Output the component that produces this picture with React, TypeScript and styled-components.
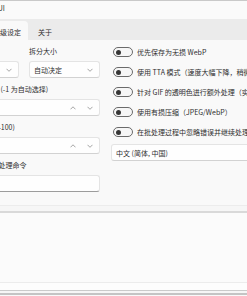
import React from 'react';
import styled, { createGlobalStyle } from 'styled-components';

const GlobalStyle = createGlobalStyle`
  html, body {
    margin: 0;
    padding: 0;
    overflow: hidden;
    background: #f9f9f9;
  }
  body {
    font-family: "Noto Sans CJK SC", "Noto Sans", sans-serif;
    font-size: 7px;
    color: #2e2e2e;
  }
`;

const Window = styled.div`
  width: 420px;
  height: 296px;
  margin-left: -60px;
  display: flex;
  flex-direction: column;
  background: #f9f9f9;
  border-top: 1px solid #c9c9c9;
`;

const TitleBar = styled.div`
  height: 18px;
  box-sizing: border-box;
  padding: 2px 0 0 8px;
  line-height: 10px;
  background: #fafafa;
`;

const TabStrip = styled.div`
  height: 21px;
  display: flex;
  align-items: flex-end;
  padding-left: 4px;
  background: #ebebeb;
`;

const Tab = styled.div<{ $active?: boolean }>`
  height: 19px;
  min-width: 34px;
  box-sizing: border-box;
  padding: 2px 7px 0;
  display: flex;
  align-items: center;
  justify-content: center;
  border-radius: 4px 4px 0 0;
  background: ${p => (p.$active ? '#f9f9f9' : 'transparent')};
`;

const Content = styled.div`
  height: 166px;
  box-sizing: border-box;
  display: grid;
  grid-template-columns: 152px 200px;
  column-gap: 11px;
  padding: 6px 8px 0;
  border-bottom: 1px solid #ececec;
`;

const LeftColumn = styled.div`
  display: flex;
  flex-direction: column;
  gap: 6px;
`;

const Pair = styled.div`
  display: grid;
  grid-template-columns: 1fr 1fr;
  column-gap: 10px;
`;

const Field = styled.div`
  display: flex;
  flex-direction: column;
  gap: 5px;
`;

const Label = styled.div`
  height: 10px;
  line-height: 10px;
  white-space: nowrap;
`;

const Box = styled.div<{ $strong?: boolean }>`
  height: 17px;
  box-sizing: border-box;
  display: flex;
  align-items: center;
  gap: 11px;
  padding: 0 6px 0 4px;
  background: #fefefe;
  border: 1px solid #e4e4e4;
  border-bottom-color: ${p => (p.$strong ? '#9c9c9c' : '#d2d2d2')};
  border-radius: 3px;
  white-space: nowrap;
`;

const BoxText = styled.span`
  flex: 1;
  line-height: 10px;
`;

const RightColumn = styled.div`
  margin-top: -4px;
  display: flex;
  flex-direction: column;
`;

const ToggleRow = styled.div`
  height: 20px;
  display: flex;
  align-items: center;
  gap: 4px;
  padding-left: 2px;
  white-space: nowrap;
`;

const Switch = styled.div`
  width: 20px;
  height: 10px;
  box-sizing: border-box;
  flex: none;
  display: flex;
  align-items: center;
  padding-left: 2px;
  border: 1px solid #6a6a6a;
  border-radius: 5px;
  background: #f6f6f6;
`;

const Knob = styled.div`
  width: 5px;
  height: 5px;
  border-radius: 50%;
  background: #343434;
`;

const LangBox = styled(Box)`
  margin-top: 2px;
`;

const Spacer = styled.div`
  height: 5px;
  background: #f6f6f6;
`;

const LogPanel = styled.div`
  height: 72px;
  box-sizing: border-box;
  background: #fbfbfb;
  border-top: 2px solid #d9d9d9;
  border-bottom: 1px solid #ececec;
`;

const StatusBar = styled.div`
  height: 7px;
  background: #fdfdfd;
  border-bottom: 1px solid #cacaca;
`;

const BottomEdge = styled.div`
  height: 2px;
  background: #f6f6f6;
  border-bottom: 2px solid #c4c4c4;
`;

function Chevron({ up }: { up?: boolean }) {
  return (
    <svg width="6" height="4" viewBox="0 0 6 4">
      <polyline
        points={up ? '0.5,3.3 3,0.8 5.5,3.3' : '0.5,0.8 3,3.3 5.5,0.8'}
        fill="none"
        stroke="#8e8e8e"
        strokeWidth="0.8"
      />
    </svg>
  );
}

function Toggle({ text }: { text: string }) {
  return (
    <ToggleRow>
      <Switch>
        <Knob />
      </Switch>
      <span>{text}</span>
    </ToggleRow>
  );
}

const toggles = [
  '优先保存为无损 WebP',
  '使用 TTA 模式（速度大幅下降，稍微提升画质）',
  '针对 GIF 的透明色进行额外处理（实验性）',
  '使用有损压缩（JPEG/WebP）',
  '在批处理过程中忽略错误并继续处理',
];

export default function App() {
  return (
    <>
      <GlobalStyle />
      <Window>
        <TitleBar>Real-ESRGAN GUI</TitleBar>
        <TabStrip>
          <Tab>基本设定</Tab>
          <Tab $active>高级设定</Tab>
          <Tab>关于</Tab>
        </TabStrip>
        <Content>
          <LeftColumn>
            <Pair>
              <Field>
                <Label>模型</Label>
                <Box>
                  <BoxText>x4plus</BoxText>
                  <Chevron />
                </Box>
              </Field>
              <Field>
                <Label>拆分大小</Label>
                <Box>
                  <BoxText>自动决定</BoxText>
                  <Chevron />
                </Box>
              </Field>
            </Pair>
            <Field>
              <Label>GPU 设备的编号 (-1 为自动选择)</Label>
              <Box>
                <BoxText>-1</BoxText>
                <Chevron up />
                <Chevron />
              </Box>
            </Field>
            <Field>
              <Label>JPG 压缩质量 (0-100)</Label>
              <Box>
                <BoxText>90</BoxText>
                <Chevron up />
                <Chevron />
              </Box>
            </Field>
            <Field>
              <Label>转换完成后执行 处理命令</Label>
              <Box $strong>
                <BoxText />
              </Box>
            </Field>
          </LeftColumn>
          <RightColumn>
            {toggles.map(t => (
              <Toggle key={t} text={t} />
            ))}
            <LangBox>
              <BoxText>中文 (简体, 中国)</BoxText>
            </LangBox>
          </RightColumn>
        </Content>
        <Spacer />
        <LogPanel />
        <StatusBar />
        <BottomEdge />
      </Window>
    </>
  );
}
